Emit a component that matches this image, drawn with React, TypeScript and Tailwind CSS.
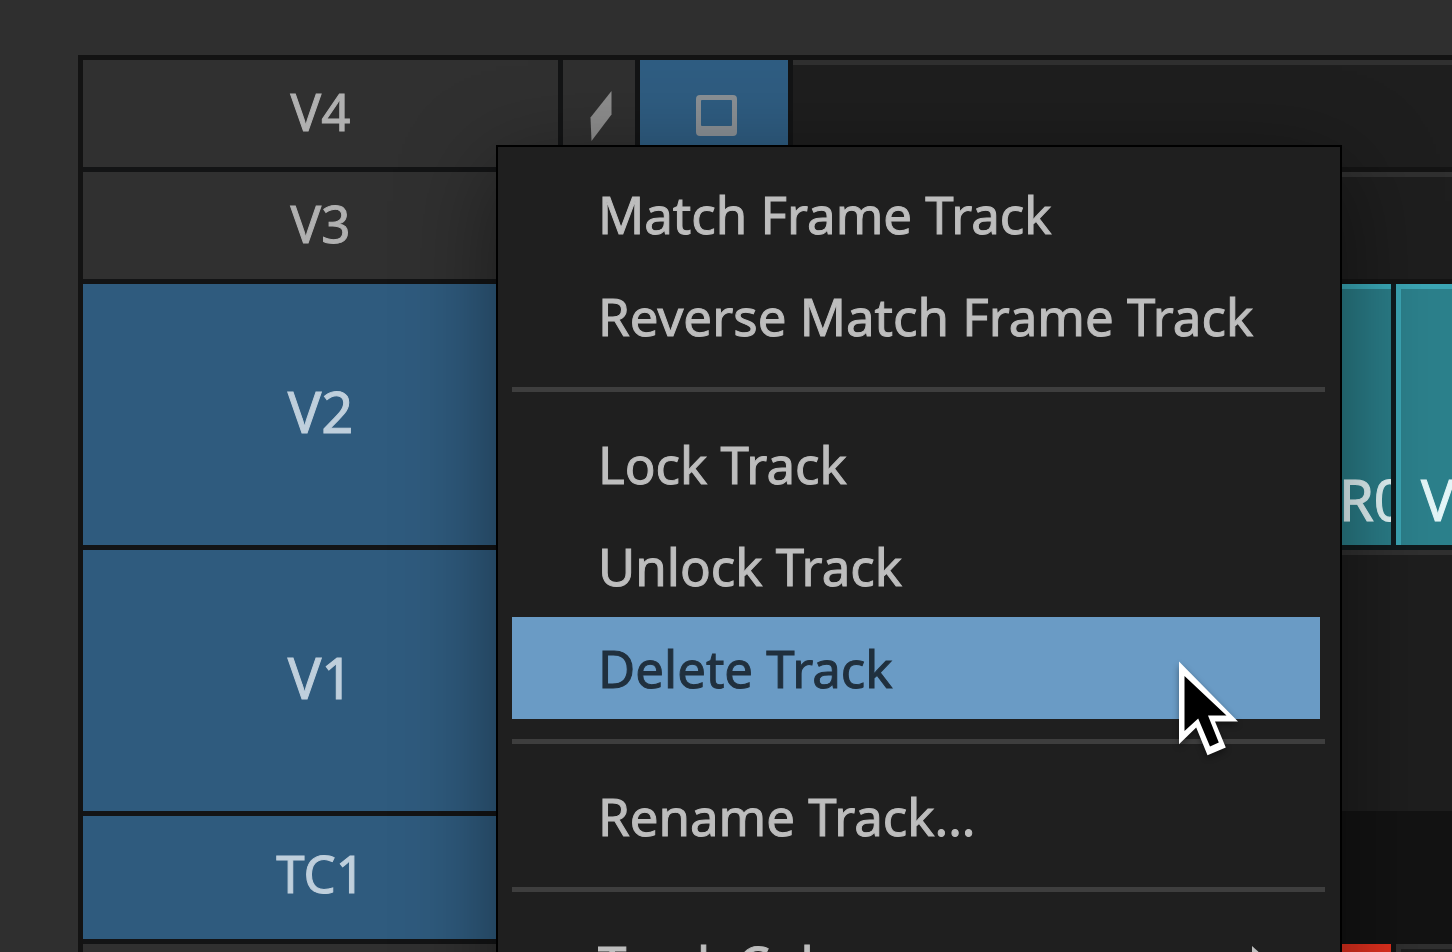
import clsx from "clsx";

type Track = {
  name: string;
  height: string;
  selected: boolean;
  lane: "empty" | "clips" | "timecode" | "marks";
};

const tracks: Track[] = [
  { name: "V4", height: "h-28 text-[51px]", selected: false, lane: "empty" },
  { name: "V3", height: "h-28 text-[51px]", selected: false, lane: "empty" },
  { name: "V2", height: "h-[266px] text-[56px]", selected: true, lane: "clips" },
  { name: "V1", height: "h-[266px] text-[56px]", selected: true, lane: "empty" },
  { name: "TC1", height: "h-32 text-[51px]", selected: true, lane: "timecode" },
  { name: "", height: "h-28 text-[51px]", selected: false, lane: "marks" },
];

const menuGroups = [
  ["Match Frame Track", "Reverse Match Frame Track"],
  ["Lock Track", "Unlock Track", "Delete Track"],
  ["Rename Track..."],
  ["Track Color"],
];

function PatchIcon() {
  return (
    <svg width="22" height="50" viewBox="0 0 22 50" aria-hidden="true">
      <path d="M0.5 26.5 21.5 0v23.5L1.5 50Z" fill="#8e8e8e" />
    </svg>
  );
}

function MonitorIcon() {
  return (
    <svg width="41" height="41" viewBox="0 0 41 41" aria-hidden="true">
      <path
        fillRule="evenodd"
        fill="#8b9196"
        d="M4 0h33a4 4 0 0 1 4 4v33a4 4 0 0 1-4 4H4a4 4 0 0 1-4-4V4a4 4 0 0 1 4-4ZM6 5Q5 5 5 6v24q0 1 1 1h29q1 0 1-1V6q0-1-1-1Z"
      />
    </svg>
  );
}

function Pointer() {
  return (
    <svg
      className="absolute left-[1174px] top-[658px] drop-shadow-[0_3px_3px_rgba(0,0,0,0.4)] pointer-events-none"
      width="70"
      height="104"
      viewBox="0 0 70 104"
      aria-hidden="true"
    >
      <path d="M5 3.5 64 63.5H41L51.8 89.5 33.5 97.3 22.2 69.5 5 86.3Z" fill="#fff" />
      <path d="M10.5 18 52.5 57.5H34L44.8 84.5 36 88.5 24.2 60.5 10.5 73Z" fill="#000" />
    </svg>
  );
}

function Lane({ lane }: { lane: Track["lane"] }) {
  if (lane === "clips") {
    return (
      <div className="flex-1 min-w-0 flex gap-[5px] bg-[#0e1c20] pl-[540px] border-b-[5px] border-[#111a1c] leading-[76px] text-[#e4f6f8]">
        <div className="w-[58px] shrink-0 flex items-end overflow-hidden bg-[#2a7d88] border-t-[5px] border-[#3aa9b8] pl-[6px] pb-2">
          <span className="whitespace-nowrap">R0</span>
        </div>
        <div className="flex-1 min-w-0 flex items-end overflow-hidden bg-[#2c818c] border-t-[5px] border-l-[5px] border-[#3ca6b5] pl-5 pb-2">
          <span className="whitespace-nowrap">V</span>
        </div>
      </div>
    );
  }
  if (lane === "timecode") {
    return <div className="flex-1 -mt-[5px] bg-[#131313]" />;
  }
  if (lane === "marks") {
    return (
      <div className="flex-1 flex gap-[5px] bg-[#131313] pl-[540px]">
        <div className="w-[58px] bg-[#e0301e]" />
        <div className="flex-1 bg-[#1e1e1e] border-t-[5px] border-l-[5px] border-[#303030]" />
      </div>
    );
  }
  return <div className="flex-1 bg-[#1e1e1e] border-y-[5px] border-t-[#303030] border-b-[#141414]" />;
}

function TrackRow({ track }: { track: Track }) {
  const cell = track.selected ? "bg-[#2f5b7e]" : "bg-[#303030]";

  return (
    <div className={clsx("flex shrink-0", track.height)}>
      <div className="flex shrink-0 gap-[5px] pr-[5px] pb-[5px] bg-[#131415]">
        <button
          className={clsx(
            "w-[475px] text-center leading-none",
            cell,
            track.selected ? "pb-2 text-[#bfcfdc]" : "pb-1 text-[#b0b0b0]"
          )}
        >
          {track.name}
        </button>
        <button
          aria-label={`Patch ${track.name}`}
          className={clsx("w-[72px] flex items-center justify-center pl-1 pt-1", cell)}
        >
          {track.name === "V4" && <PatchIcon />}
        </button>
        <button
          aria-label={`Monitor ${track.name}`}
          className={clsx(
            "w-[148px] flex items-center justify-center pl-1 pt-1",
            track.name === "V4" ? "bg-[#2f5d82]" : cell
          )}
        >
          {track.name === "V4" && <MonitorIcon />}
        </button>
      </div>
      <Lane lane={track.lane} />
    </div>
  );
}

function TrackMenu() {
  return (
    <div
      role="menu"
      className="absolute left-[496px] top-[145px] w-[846px] bg-[#1f1f1f] border-2 border-black pt-4 pb-4 pl-[14px] pr-[15px] shadow-[0_24px_90px_rgba(0,0,0,0.45)]"
    >
      {menuGroups.map((group, i) => (
        <div key={i}>
          {i > 0 && <div role="separator" className="h-[5px] mt-5 mb-[21px] bg-[#3e3e3e]" />}
          {group.map((label) => (
            <button
              key={label}
              role="menuitem"
              className={clsx(
                "flex items-center justify-between w-[808px] h-[102px] pl-[86px] pr-12 text-[51px] leading-none whitespace-nowrap",
                label === "Delete Track" ? "bg-[#6a9bc5] text-[#20303e]" : "text-[#bdbdbd]"
              )}
            >
              {label}
              {label === "Track Color" && (
                <svg width="20" height="36" viewBox="0 0 20 36" aria-hidden="true">
                  <path d="M0 0 20 18 0 36Z" fill="#bdbdbd" />
                </svg>
              )}
            </button>
          ))}
        </div>
      ))}
    </div>
  );
}

export default function App() {
  return (
    <div className="relative h-screen overflow-hidden bg-[#2f2f2f] pt-[55px] pl-[78px] font-['Noto_Sans',sans-serif] [-webkit-text-stroke:1px]">
      {/* Timeline */}
      <div className="flex flex-col border-t-[5px] border-l-[5px] border-[#131313]">
        {tracks.map((track, i) => (
          <TrackRow key={i} track={track} />
        ))}
      </div>

      <TrackMenu />
      <Pointer />
    </div>
  );
}
